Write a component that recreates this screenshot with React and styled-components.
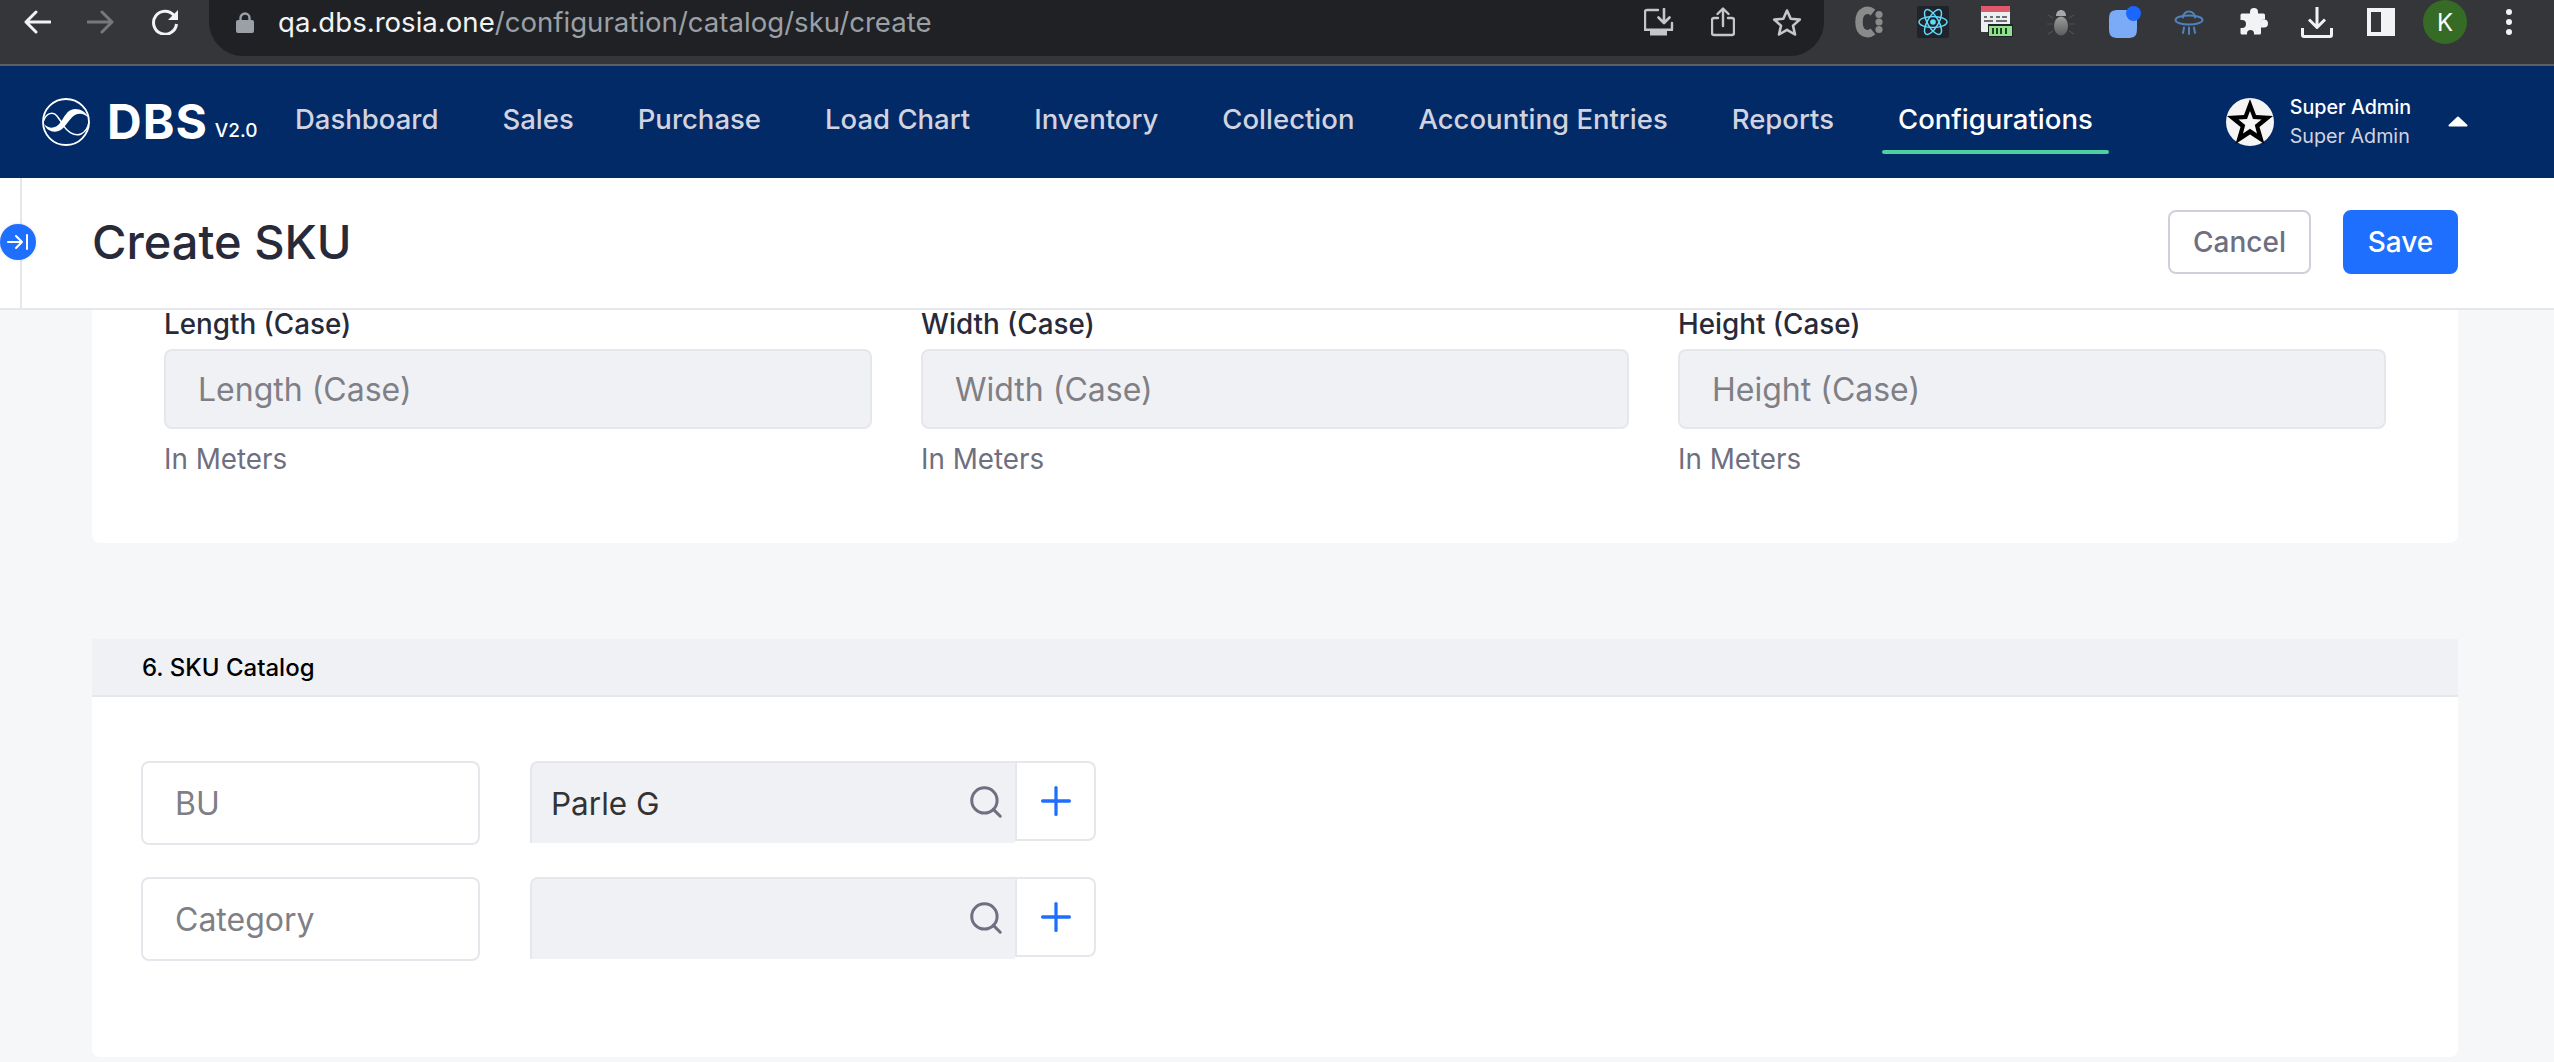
import React from "react";
import styled, { createGlobalStyle } from "styled-components";
import { Search, Plus } from "lucide-react";

const Global = createGlobalStyle`
  html, body { margin: 0; padding: 0; height: 100%; overflow: hidden; background: #f6f7f9; }
  * { box-sizing: border-box; }
  body { font-family: Inter, "Liberation Sans", sans-serif; }
`;

const Page = styled.div`
  height: 1062px;
  overflow: hidden;
  position: relative;
  background: #f6f7f9;
`;

/* browser chrome */
const ChromeBar = styled.div`
  height: 66px;
  background: #35363a;
  border-bottom: 2px solid #5d5e61;
  display: flex;
  align-items: flex-start;
  padding-left: 5px;
`;
const Slot = styled.div`
  width: 64px;
  height: 44px;
  flex: none;
  display: flex;
  align-items: center;
  justify-content: center;
`;
const UrlPill = styled.div`
  width: 1615px;
  height: 56px;
  margin: 0 13px 0 12px;
  padding: 0 5px 0 27px;
  flex: none;
  display: flex;
  align-items: flex-start;
  background: #202124;
  border-radius: 0 0 34px 34px;
`;
const LockSlot = styled.div`
  height: 44px;
  width: 42px;
  display: flex;
  align-items: center;
`;
const Url = styled.div`
  flex: 1;
  height: 44px;
  line-height: 44px;
  font-size: 27.6px;
  color: #9aa0a6;
  white-space: nowrap;
  span { color: #f1f3f4; }
`;
const Avatar = styled.div`
  width: 44px;
  height: 44px;
  border-radius: 50%;
  background: #356b24;
  color: #fff;
  font-size: 24px;
  display: flex;
  align-items: center;
  justify-content: center;
`;

/* app header */
const NavBar = styled.header`
  height: 112px;
  background: #012a67;
  display: flex;
  align-items: center;
  padding-left: 42px;
`;
const Brand = styled.div`
  display: flex;
  align-items: center;
  width: 237px;
  flex: none;
`;
const BrandName = styled.span`
  margin-left: 17px;
  font-size: 48px;
  line-height: 1;
  font-weight: 700;
  letter-spacing: 1px;
  color: #fff;
`;
const BrandVersion = styled.span`
  margin: 17px 0 0 7px;
  font-size: 19px;
  font-weight: 500;
  color: #fff;
`;
const NavList = styled.nav`
  display: flex;
  gap: 32px;
  height: 100%;
`;
const NavItem = styled.a`
  position: relative;
  padding: 0 16px 6px;
  display: flex;
  align-items: center;
  font-size: 27.5px;
  font-weight: 500;
  color: ${(p) => (p.$active ? "#fff" : "#d3d3e0")};
  white-space: nowrap;
  &::after {
    content: "";
    display: ${(p) => (p.$active ? "block" : "none")};
    position: absolute;
    left: 0;
    right: 0;
    top: 84px;
    height: 4px;
    border-radius: 2px;
    background: #50d0a0;
  }
`;
const UserBox = styled.div`
  margin-left: 117px;
  display: flex;
  align-items: center;
`;
const UserText = styled.div`
  margin-left: 16px;
  display: flex;
  flex-direction: column;
  gap: 8px;
`;
const UserName = styled.div`
  font-size: 19.7px;
  line-height: 21px;
  font-weight: ${(p) => (p.$sub ? 400 : 500)};
  color: ${(p) => (p.$sub ? "#d3d3e0" : "#fff")};
  white-space: nowrap;
`;
const Caret = styled.svg`
  margin-left: 37px;
  margin-top: -2px;
`;

/* page title bar */
const TitleBar = styled.div`
  height: 132px;
  background: #fff;
  border-bottom: 2px solid #e6e6ed;
  display: flex;
  align-items: stretch;
  padding-right: 96px;
`;
const Rail = styled.div`
  width: 22px;
  flex: none;
  border-right: 2px solid #e6e6ed;
`;
const RailToggle = styled.div`
  position: absolute;
  left: 0;
  top: 224px;
  width: 36px;
  height: 36px;
  border-radius: 50%;
  background: #1f6fff;
  box-shadow: 0 0 3px rgba(0, 0, 0, 0.15);
  display: flex;
  align-items: center;
  justify-content: center;
`;
const Title = styled.h1`
  margin: -3px auto 0 70px;
  align-self: center;
  font-size: 47px;
  font-weight: 500;
  line-height: 1;
  color: #282a3a;
`;
const Actions = styled.div`
  display: flex;
  gap: 32px;
  padding-top: 32px;
`;
const Button = styled.button`
  height: 64px;
  width: ${(p) => (p.$primary ? "115px" : "143px")};
  border-radius: 8px;
  border: 2px solid ${(p) => (p.$primary ? "#1f6fff" : "#d0d0dc")};
  background: ${(p) => (p.$primary ? "#1f6fff" : "#fff")};
  color: ${(p) => (p.$primary ? "#fff" : "#6e6f80")};
  font-family: inherit;
  font-size: 28px;
  font-weight: 500;
  padding: 0;
`;

/* content */
const Content = styled.main`
  padding: 0 96px 0 92px;
`;
const Card = styled.section`
  background: #fff;
  border-radius: 0 0 8px 8px;
  margin-bottom: 96px;
`;
const DimensionGrid = styled.div`
  display: grid;
  grid-template-columns: repeat(3, 1fr);
  gap: 49px;
  padding: 0 72px 68px;
`;
const Label = styled.label`
  display: block;
  font-size: 27.8px;
  line-height: 28px;
  margin-bottom: 11px;
  font-weight: 500;
  color: #282a3a;
`;
const Input = styled.input`
  display: block;
  width: ${(p) => (p.$narrow ? "339px" : "100%")};
  height: ${(p) => (p.$narrow ? "84px" : "80px")};
  flex: none;
  padding: 0 32px;
  border: 2px solid #e6e6ed;
  border-radius: 8px;
  background: ${(p) => (p.$narrow ? "#fff" : "#f0f1f5")};
  font-family: inherit;
  font-size: 32px;
  outline: none;
  &::placeholder { color: #7f7f85; opacity: 1; }
`;
const Hint = styled.div`
  margin-top: 14px;
  font-size: 27.8px;
  line-height: 32px;
  color: #6e6f80;
`;
const CardHeader = styled.div`
  height: 58px;
  padding-left: 50px;
  display: flex;
  align-items: center;
  background: #f0f1f5;
  border-bottom: 2px solid #e6e6ed;
  font-size: 24px;
  font-weight: 500;
  color: #000;
`;
const CatalogBody = styled.div`
  padding: 64px 49px 96px;
  display: flex;
  flex-direction: column;
  gap: 32px;
`;
const CatalogRow = styled.div`
  display: flex;
  align-items: flex-start;
  gap: 50px;
`;
const LookupGroup = styled.div`
  display: flex;
  align-items: flex-start;
`;
const LookupBox = styled.div`
  width: 485px;
  height: 82px;
  padding: 0 10px 0 19px;
  display: flex;
  align-items: center;
  justify-content: space-between;
  background: #f0f1f5;
  border-top: 2px solid #e6e6ed;
  border-left: 2px solid #e6e6ed;
  border-radius: 8px 0 0 0;
  font-size: 31.5px;
  color: #333;
  svg { color: #6e6f80; margin-top: -2px; }
`;
const AddButton = styled.button`
  width: 81px;
  height: 80px;
  padding: 0;
  display: flex;
  align-items: center;
  justify-content: center;
  background: #fff;
  border: 2px solid #e6e6ed;
  border-radius: 0 8px 8px 0;
  color: #1f6fff;
`;

const stroke = { fill: "none", stroke: "currentColor", strokeLinecap: "round", strokeLinejoin: "round" };

const ArrowIcon = ({ flip, color }) => (
  <svg width="28" height="24" viewBox="0 0 28 24" style={{ color, transform: flip ? "scaleX(-1)" : undefined }}>
    <path d="M13 2 3 12l10 10M3 12h24" {...stroke} strokeWidth="3" />
  </svg>
);
const ReloadIcon = () => (
  <svg width="28" height="26" viewBox="0 0 28 26" style={{ color: "#f1f3f4" }}>
    <path d="M23 6.500A11.500 11.500 0 1 0 25.500 15" {...stroke} strokeWidth="3" strokeLinecap="butt" />
    <path d="M27 1v10H17z" fill="currentColor" />
  </svg>
);
const LockIcon = () => (
  <svg width="18" height="21" viewBox="0 0 18 21">
    <path d="M4.500 9V6a4.500 4.500 0 0 1 9 0v3" fill="none" stroke="#9aa0a6" strokeWidth="2.400" />
    <rect x="0" y="8" width="18" height="13" rx="2" fill="#9aa0a6" />
  </svg>
);
const InstallIcon = () => (
  <svg width="30" height="28" viewBox="0 0 30 28" style={{ color: "#c4c6c9" }}>
    <path d="M14 2H3a2 2 0 0 0-2 2v17M28 15v6" {...stroke} strokeWidth="2.400" />
    <path d="M20 1v13M14.500 9.500 20 15l5.500-5.500" {...stroke} strokeWidth="2.600" />
    <rect x="0" y="20.500" width="29" height="2.500" fill="currentColor" />
    <rect x="6" y="23" width="17" height="4.500" fill="currentColor" />
  </svg>
);
const ShareIcon = () => (
  <svg width="24" height="30" viewBox="0 0 24 30" style={{ color: "#c4c6c9" }}>
    <path d="M7 11H3a2 2 0 0 0-2 2v13a2 2 0 0 0 2 2h18a2 2 0 0 0 2-2V13a2 2 0 0 0-2-2h-4" {...stroke} strokeWidth="2.400" />
    <path d="M12 19V2M6.500 7 12 1.500 17.500 7" {...stroke} strokeWidth="2.400" />
  </svg>
);
const StarIcon = () => (
  <svg width="30" height="28" viewBox="0 0 30 28" style={{ color: "#c4c6c9" }}>
    <path d="M15 2.500 18.700 10.800 27.800 11.600 21 17.600 23 26.500 15 21.800 7 26.500 9 17.600 2.200 11.600 11.300 10.800Z" {...stroke} strokeWidth="2.600" />
  </svg>
);
const CssExtIcon = () => (
  <svg width="28" height="32" viewBox="0 0 28 32" style={{ color: "#8a8a8a" }}>
    <path d="M18 6.500C13 2.500 4 3.500 4 16s9 13.500 14 9.500" {...stroke} strokeWidth="7.500" strokeLinecap="butt" />
    <circle cx="24" cy="8.500" r="3.600" fill="currentColor" />
    <circle cx="24" cy="16" r="3.600" fill="currentColor" />
    <circle cx="24" cy="23.500" r="3.600" fill="currentColor" />
  </svg>
);
const ReactExtIcon = () => (
  <svg width="32" height="32" viewBox="0 0 32 32">
    <rect width="32" height="32" rx="2" fill="#20232a" />
    <g fill="none" stroke="#61dafb" strokeWidth="1.500">
      <ellipse cx="16" cy="16" rx="14" ry="5.500" />
      <ellipse cx="16" cy="16" rx="14" ry="5.500" transform="rotate(60 16 16)" />
      <ellipse cx="16" cy="16" rx="14" ry="5.500" transform="rotate(120 16 16)" />
    </g>
    <circle cx="16" cy="16" r="2.800" fill="#61dafb" />
  </svg>
);
const JsonExtIcon = () => (
  <svg width="32" height="32" viewBox="0 0 32 32">
    <rect x="0" y="0" width="29" height="26" rx="1" fill="#eceff1" />
    <rect x="0" y="0" width="29" height="6" rx="1" fill="#e0586c" />
    <path d="M3 11h3M9 11h3M15 11h4M21 11h5M3 15h9M15 15h11" stroke="#444" strokeWidth="1.500" />
    <rect x="7" y="18" width="25" height="13" fill="#20232a" />
    <rect x="8" y="20" width="23" height="10" fill="#8fe08a" />
    <path d="M12 22v6M16 22v6M20 22v6M25 22v6" stroke="#20402a" strokeWidth="2" />
  </svg>
);
const BugExtIcon = () => (
  <svg width="28" height="28" viewBox="0 0 28 28">
    <defs>
      <linearGradient id="bugFill" x1="0" y1="0" x2="0" y2="1">
        <stop offset="0" stopColor="#9c9c9c" />
        <stop offset="1" stopColor="#5c5c5c" />
      </linearGradient>
    </defs>
    <path d="M9 8c0-8 10-8 10 0z" fill="#a8a8a8" />
    <ellipse cx="14" cy="18" rx="7" ry="9.500" fill="url(#bugFill)" />
    <path d="M1 7l5 3M27 7l-5 3M0 16h6M28 16h-6M1 26l5-3M27 26l-5-3" stroke="#4e4f52" strokeWidth="1.200" />
  </svg>
);
const BlueExtIcon = () => (
  <svg width="32" height="32" viewBox="0 0 32 32">
    <path d="M12 2h8c8 0 10 2 10 10v8c0 8-2 10-10 10h-8C4 30 2 28 2 20v-8C2 4 4 2 12 2z" fill="#7baaf7" transform="translate(-2 2)" />
    <circle cx="24.500" cy="7.500" r="7.500" fill="#1a67ff" />
  </svg>
);
const UfoExtIcon = () => (
  <svg width="30" height="26" viewBox="0 0 30 26" style={{ color: "#4f82bd" }}>
    <path d="M9 8.500a6 6 0 0 1 12 0" {...stroke} strokeWidth="2" />
    <ellipse cx="15" cy="11" rx="13.500" ry="4.500" {...stroke} strokeWidth="2" />
    <path d="M10 18.500 9 24M15 18.500V25M20 18.500l1 5.500" {...stroke} strokeWidth="2" />
  </svg>
);
const PuzzleIcon = () => (
  <svg width="29" height="28" viewBox="0 0 29 28">
    <path
      d="M11 4a4 4 0 0 1 8 0v1.500h5.500a1.500 1.500 0 0 1 1.500 1.500v4.500h-.5a3.500 3.500 0 0 0 0 8h.5-4v5.500a1.500 1.500 0 0 1-1.500 1.500H15v-1a3.500 3.500 0 0 0-7 0v1H3a1.500 1.500 0 0 1-1.500-1.500V20H3a4 4 0 0 0 0-8H1.500V7A1.500 1.500 0 0 1 3 5.500h8z"
      fill="#f1f3f4"
    />
    <circle cx="25" cy="15.500" r="4" fill="#f1f3f4" />
  </svg>
);
const DownloadIcon = () => (
  <svg width="32" height="32" viewBox="0 0 32 32" style={{ color: "#f1f3f4" }}>
    <path d="M16 1v20M8 13.500l8 8 8-8" {...stroke} strokeWidth="3" strokeLinecap="butt" />
    <path d="M1.500 22v7a1.500 1.500 0 0 0 1.500 1.500h26a1.500 1.500 0 0 0 1.500-1.500v-7" {...stroke} strokeWidth="3" strokeLinecap="butt" />
  </svg>
);
const PanelIcon = () => (
  <svg width="28" height="28" viewBox="0 0 28 28">
    <path fillRule="evenodd" d="M0 0h28v28H0zM4 4v20h10V4z" fill="#f1f3f4" />
  </svg>
);
const KebabIcon = () => (
  <svg width="6" height="26" viewBox="0 0 6 26">
    <circle cx="3" cy="3" r="3" fill="#f1f3f4" />
    <circle cx="3" cy="13" r="3" fill="#f1f3f4" />
    <circle cx="3" cy="23" r="3" fill="#f1f3f4" />
  </svg>
);
const LogoMark = () => (
  <svg width="48" height="48" viewBox="0 0 48 48" fill="none" stroke="#fff" style={{ flex: "none" }}>
    <circle cx="24" cy="24" r="23" strokeWidth="1.800" />
    <path d="M2 26C8 32 14 30 18 25C22 20 25 11 33 11C39 11 44 14 46.500 20C42 15 37 15 33 17C28 20 24 28 20 31C14 36 5 34 2 26z" fill="#fff" stroke="none" />
    <path d="M1.500 23C4 15 11 13 15 18L20 25C24 33 32 39 39 36C43 34 46 30 47 24" strokeWidth="1.500" />
  </svg>
);
const UserStar = () => (
  <svg width="48" height="48" viewBox="0 0 48 48" style={{ flex: "none" }}>
    <circle cx="24" cy="24" r="24" fill="#f5f5f5" />
    <polygon points="24,1 30,17 47,18 33.500,29 38.500,46 24,36.500 9.500,46 14.500,29 1,18 18,17" fill="#000" />
    <polygon points="24,13 27,21 35.500,21.500 28.800,27 31,35.500 24,30.800 17,35.500 19.200,27 12.500,21.500 21,21" fill="#f5f5f5" />
  </svg>
);

const toolbarRight = [InstallIcon, ShareIcon, StarIcon];
const extensions = [CssExtIcon, ReactExtIcon, JsonExtIcon, BugExtIcon, BlueExtIcon, UfoExtIcon, PuzzleIcon, DownloadIcon, PanelIcon];
const navItems = ["Dashboard", "Sales", "Purchase", "Load Chart", "Inventory", "Collection", "Accounting Entries", "Reports", "Configurations"];
const dimensions = ["Length (Case)", "Width (Case)", "Height (Case)"];

const CatalogLine = ({ placeholder, value }) => (
  <CatalogRow>
    <Input $narrow placeholder={placeholder} readOnly />
    <LookupGroup>
      <LookupBox>
        <span>{value}</span>
        <Search size={38} strokeWidth={1.9} />
      </LookupBox>
      <AddButton>
        <Plus size={46} strokeWidth={1.7} />
      </AddButton>
    </LookupGroup>
  </CatalogRow>
);

export default function App() {
  return (
    <Page>
      <Global />
      <ChromeBar>
        <Slot><ArrowIcon color="#f1f3f4" /></Slot>
        <Slot><ArrowIcon flip color="#77787b" /></Slot>
        <Slot><ReloadIcon /></Slot>
        <UrlPill>
          <LockSlot><LockIcon /></LockSlot>
          <Url><span>qa.dbs.rosia.one</span>/configuration/catalog/sku/create</Url>
          {toolbarRight.map((Icon, i) => <Slot key={i}><Icon /></Slot>)}
        </UrlPill>
        {extensions.map((Icon, i) => <Slot key={i}><Icon /></Slot>)}
        <Slot><Avatar>K</Avatar></Slot>
        <Slot><KebabIcon /></Slot>
      </ChromeBar>

      <NavBar>
        <Brand>
          <LogoMark />
          <BrandName>DBS</BrandName>
          <BrandVersion>V2.0</BrandVersion>
        </Brand>
        <NavList>
          {navItems.map((n) => (
            <NavItem key={n} $active={n === "Configurations"}>{n}</NavItem>
          ))}
        </NavList>
        <UserBox>
          <UserStar />
          <UserText>
            <UserName>Super Admin</UserName>
            <UserName $sub>Super Admin</UserName>
          </UserText>
          <Caret width="20" height="11" viewBox="0 0 20 11">
            <path d="M10 1.500 18.500 9.500H1.500z" fill="#fff" stroke="#fff" strokeWidth="2" strokeLinejoin="round" />
          </Caret>
        </UserBox>
      </NavBar>

      <TitleBar>
        <Rail />
        <Title>Create SKU</Title>
        <Actions>
          <Button>Cancel</Button>
          <Button $primary>Save</Button>
        </Actions>
      </TitleBar>
      <RailToggle>
        <svg width="22" height="18" viewBox="0 0 22 18" fill="none" stroke="#fff" strokeWidth="2" strokeLinecap="round" strokeLinejoin="round">
          <path d="M1 9h14M9 3l6 6-6 6M20 2v14" />
        </svg>
      </RailToggle>

      <Content>
        <Card>
          <DimensionGrid>
            {dimensions.map((d) => (
              <div key={d}>
                <Label>{d}</Label>
                <Input placeholder={d} readOnly />
                <Hint>In Meters</Hint>
              </div>
            ))}
          </DimensionGrid>
        </Card>
        <Card>
          <CardHeader>6. SKU Catalog</CardHeader>
          <CatalogBody>
            <CatalogLine placeholder="BU" value="Parle G" />
            <CatalogLine placeholder="Category" />
          </CatalogBody>
        </Card>
      </Content>
    </Page>
  );
}
